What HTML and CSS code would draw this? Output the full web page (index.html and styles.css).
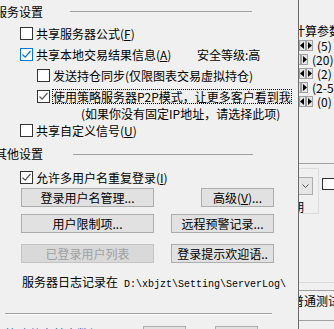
FILE: index.html
```html
<!DOCTYPE html>
<html lang="zh-CN">
<head>
  <meta charset="UTF-8">
  <title>服务设置</title>
  <link rel="stylesheet" href="styles.css">
</head>
<body>
  <div class="screen">
    <!-- Front dialog -->
    <div class="dialog">
      <div class="group-head">
        <span class="group-title">服务设置</span>
        <span class="group-rule"></span>
      </div>

      <div class="check-row lvl1">
        <span class="box"></span>
        <span>共享服务器公式(<u>F</u>)</span>
      </div>
      <div class="check-row lvl1">
        <span class="box hot"><svg width="11" height="11" viewBox="0 0 11 11"><path d="M1.5 5.5 L4.2 8.2 L9.5 2" fill="none" stroke="#0078d7" stroke-width="1.2"/></svg></span>
        <span class="wide-label">共享本地交易结果信息(<u>A</u>)</span>
        <span>安全等级:高</span>
      </div>
      <div class="check-row lvl2">
        <span class="box"></span>
        <span>发送持仓同步(仅限图表交易虚拟持仓)</span>
      </div>
      <div class="check-row lvl2">
        <span class="box"><svg width="11" height="11" viewBox="0 0 11 11"><path d="M1.5 5.5 L4.2 8.2 L9.5 2" fill="none" stroke="#555" stroke-width="1.2"/></svg></span>
        <span class="focus">使用策略服务器P2P模式，让更多客户看到我</span>
      </div>
      <div class="note">(如果你没有固定IP地址，请选择此项)</div>
      <div class="check-row lvl1">
        <span class="box"></span>
        <span>共享自定义信号(<u>U</u>)</span>
      </div>

      <div class="group-head second">
        <span class="group-title">其他设置</span>
        <span class="group-rule"></span>
      </div>

      <div class="check-row lvl1">
        <span class="box"><svg width="11" height="11" viewBox="0 0 11 11"><path d="M1.5 5.5 L4.2 8.2 L9.5 2" fill="none" stroke="#555" stroke-width="1.2"/></svg></span>
        <span>允许多用户名重复登录(<u>I</u>)</span>
      </div>

      <div class="btn-row">
        <button class="btn btn-wide">登录用户名管理...</button>
        <button class="btn btn-short">高级(<u>V</u>)...</button>
      </div>
      <div class="btn-row row-2">
        <button class="btn btn-wide">用户限制项...</button>
        <button class="btn btn-mid">远程预警记录...</button>
      </div>
      <div class="btn-row row-3">
        <button class="btn btn-wide" disabled>已登录用户列表</button>
        <button class="btn btn-mid">登录提示欢迎语..</button>
      </div>

      <div class="log">服务器日志记录在<span class="path"> D:\xbjzt\Setting\ServerLog\</span></div>

      <div class="sep"></div>

      <div class="bottom">
        <span class="link">策略共享基本数据</span>
        <button class="btn btn-tiny">确定</button>
        <button class="btn btn-tiny gap">取消</button>
      </div>
    </div>

    <!-- Window behind, clipped -->
    <div class="side">
      <div class="side-title">计算参数</div>
      <div class="spin-row">
        <span class="arrow"><svg width="5" height="7" viewBox="0 0 5 7"><path d="M4 0 L0 3.5 L4 7 Z" fill="#000"/></svg></span>
        <span class="arrow"><svg width="5" height="7" viewBox="0 0 5 7"><path d="M1 0 L5 3.5 L1 7 Z" fill="#000"/></svg></span>
        <span class="spin-text">(5)</span>
      </div>
      <div class="spin-row shift">
        <span class="arrow"><svg width="5" height="7" viewBox="0 0 5 7"><path d="M4 0 L0 3.5 L4 7 Z" fill="#000"/></svg></span>
        <span class="arrow"><svg width="5" height="7" viewBox="0 0 5 7"><path d="M1 0 L5 3.5 L1 7 Z" fill="#000"/></svg></span>
        <span class="spin-text">(20)</span>
      </div>
      <div class="spin-row">
        <span class="arrow"><svg width="5" height="7" viewBox="0 0 5 7"><path d="M4 0 L0 3.5 L4 7 Z" fill="#000"/></svg></span>
        <span class="arrow"><svg width="5" height="7" viewBox="0 0 5 7"><path d="M1 0 L5 3.5 L1 7 Z" fill="#000"/></svg></span>
        <span class="spin-text">(2)</span>
      </div>
      <div class="spin-row shift">
        <span class="arrow"><svg width="5" height="7" viewBox="0 0 5 7"><path d="M4 0 L0 3.5 L4 7 Z" fill="#000"/></svg></span>
        <span class="arrow"><svg width="5" height="7" viewBox="0 0 5 7"><path d="M1 0 L5 3.5 L1 7 Z" fill="#000"/></svg></span>
        <span class="spin-text">(2-5)</span>
      </div>
      <div class="spin-row">
        <span class="arrow"><svg width="5" height="7" viewBox="0 0 5 7"><path d="M4 0 L0 3.5 L4 7 Z" fill="#000"/></svg></span>
        <span class="arrow"><svg width="5" height="7" viewBox="0 0 5 7"><path d="M1 0 L5 3.5 L1 7 Z" fill="#000"/></svg></span>
        <span class="spin-text">(0)</span>
      </div>

      <div class="side-rule top-rule"></div>

      <div class="side-mid">
        <div class="groupbox">
          <div class="combo"><svg width="7" height="4" viewBox="0 0 7 4"><path d="M0.5 0.5 L3.5 3.5 L6.5 0.5" fill="none" stroke="#555" stroke-width="1"/></svg></div>
          <div class="period">期</div>
        </div>
        <div class="textbox"></div>
      </div>

      <div class="side-rule light"></div>
      <div class="side-rule pair"></div>
      <div class="side-text">普通测试</div>
      <div class="side-rule"></div>
    </div>
  </div>
</body>
</html>
```

FILE: styles.css
```css
/* Page */
body {
  margin: 0;
  background-color: #f0f0f0;
  color: #000;
  font-family: "Noto Sans CJK SC", "Liberation Sans", sans-serif;
  font-size: 12px;
}

.screen {
  display: flex;
  width: 334px;
  height: 329px;
  overflow: hidden;
}

/* Dialog */
.dialog {
  flex: none;
  width: 299px;
  box-sizing: border-box;
  padding-right: 24px;
  border-right: 1px solid #6b6b6b;
  overflow: hidden;
}

.group-head {
  display: flex;
  align-items: center;
  height: 23px;
  white-space: nowrap;
}

.group-title {
  margin-left: -5px;
  line-height: 14px;
}

.group-rule {
  width: 182px;
  height: 1px;
  margin-left: 27px;
  background-color: #a0a0a0;
}

.group-head.second {
  height: 26px;
}

.group-head.second .group-rule {
  width: 180px;
  margin-left: 30px;
}

.check-row {
  display: flex;
  align-items: center;
  height: 21px;
  white-space: nowrap;
}

.lvl1 {
  padding-left: 20px;
}

.lvl2 {
  padding-left: 37px;
}

.box {
  flex: none;
  display: flex;
  align-items: center;
  justify-content: center;
  width: 13px;
  height: 13px;
  box-sizing: border-box;
  margin-right: 3px;
  border: 1px solid #333;
  background-color: #fff;
}

.box.hot {
  border-color: #0078d7;
}

.wide-label {
  width: 161px;
}

.focus {
  line-height: 13px;
  outline: 1px dotted #000;
}

.note {
  height: 13px;
  line-height: 13px;
  padding-left: 81px;
  white-space: nowrap;
}

/* Buttons */
.btn-row {
  display: flex;
  justify-content: space-between;
  padding-left: 21px;
}

.row-2 {
  margin-top: 7px;
}

.row-3 {
  margin-top: 11px;
}

.btn {
  height: 19px;
  box-sizing: border-box;
  padding: 0;
  border: 1px solid #adadad;
  background-color: #e1e1e1;
  color: #000;
  font: inherit;
  line-height: 17px;
  text-align: center;
  white-space: nowrap;
}

.btn:disabled {
  background-color: #d9d9d9;
  border-color: #c4c4c4;
  color: #a0a0a0;
}

.btn-wide {
  width: 133px;
}

.btn-mid {
  width: 103px;
}

.btn-short {
  width: 73px;
}

.log {
  height: 14px;
  margin-top: 12px;
  padding-left: 22px;
  line-height: 14px;
  white-space: nowrap;
}

.path {
  font-family: "Liberation Mono", monospace;
  font-size: 10px;
}

.sep {
  margin: 24px 2px 0 5px;
  border-top: 1px solid #a0a0a0;
  border-bottom: 1px solid #fff;
}

.bottom {
  display: flex;
  align-items: flex-start;
  margin-top: 9px;
  white-space: nowrap;
}

.link {
  width: 138px;
  padding: 3px 0 0 5px;
  color: #0066cc;
  line-height: 14px;
}

.btn-tiny {
  width: 43px;
  height: 20px;
  margin-top: 2px;
}

.btn-tiny.gap {
  margin-left: 29px;
}

/* Window behind */
.side {
  flex: 1;
  min-width: 0;
  overflow: hidden;
  padding-top: 24px;
  white-space: nowrap;
}

.side-title {
  height: 14px;
  margin-left: -6px;
  line-height: 14px;
}

.spin-row {
  display: flex;
  align-items: center;
  height: 13px;
  margin-top: 1px;
}

.spin-row.shift {
  margin-left: -5px;
}

.arrow {
  flex: none;
  display: flex;
  align-items: center;
  justify-content: center;
  width: 7px;
  height: 11px;
  box-sizing: border-box;
  border: 1px solid #a0a0a0;
  background-color: #e5e5e5;
}

.spin-text {
  margin-left: 4px;
  line-height: 13px;
}

.side-rule {
  border-top: 1px solid #a0a0a0;
}

.top-rule {
  margin-top: 55px;
}

.side-mid {
  display: flex;
  align-items: flex-start;
  margin-top: 4px;
}

.groupbox {
  flex: none;
  width: 30px;
  height: 46px;
  box-sizing: border-box;
  margin-left: -10px;
  padding: 8px 0 0 8px;
  border: 1px solid #dcdcdc;
}

.combo {
  display: flex;
  align-items: center;
  justify-content: center;
  width: 15px;
  height: 18px;
  box-sizing: border-box;
  border: 1px solid #adadad;
  background-color: #e5e5e5;
}

.period {
  margin: 6px 0 0 -6px;
  line-height: 12px;
}

.textbox {
  flex: none;
  width: 20px;
  height: 12px;
  box-sizing: border-box;
  margin: 10px 0 0 3px;
  border: 1px solid #333;
  background-color: #fff;
}

.side-rule.light {
  margin-top: 68px;
  border-top-color: #dadada;
}

.side-rule.pair {
  margin-top: 7px;
}

.side-text {
  height: 29px;
  box-sizing: border-box;
  margin-left: -7px;
  padding-top: 3px;
  line-height: 14px;
}
```
